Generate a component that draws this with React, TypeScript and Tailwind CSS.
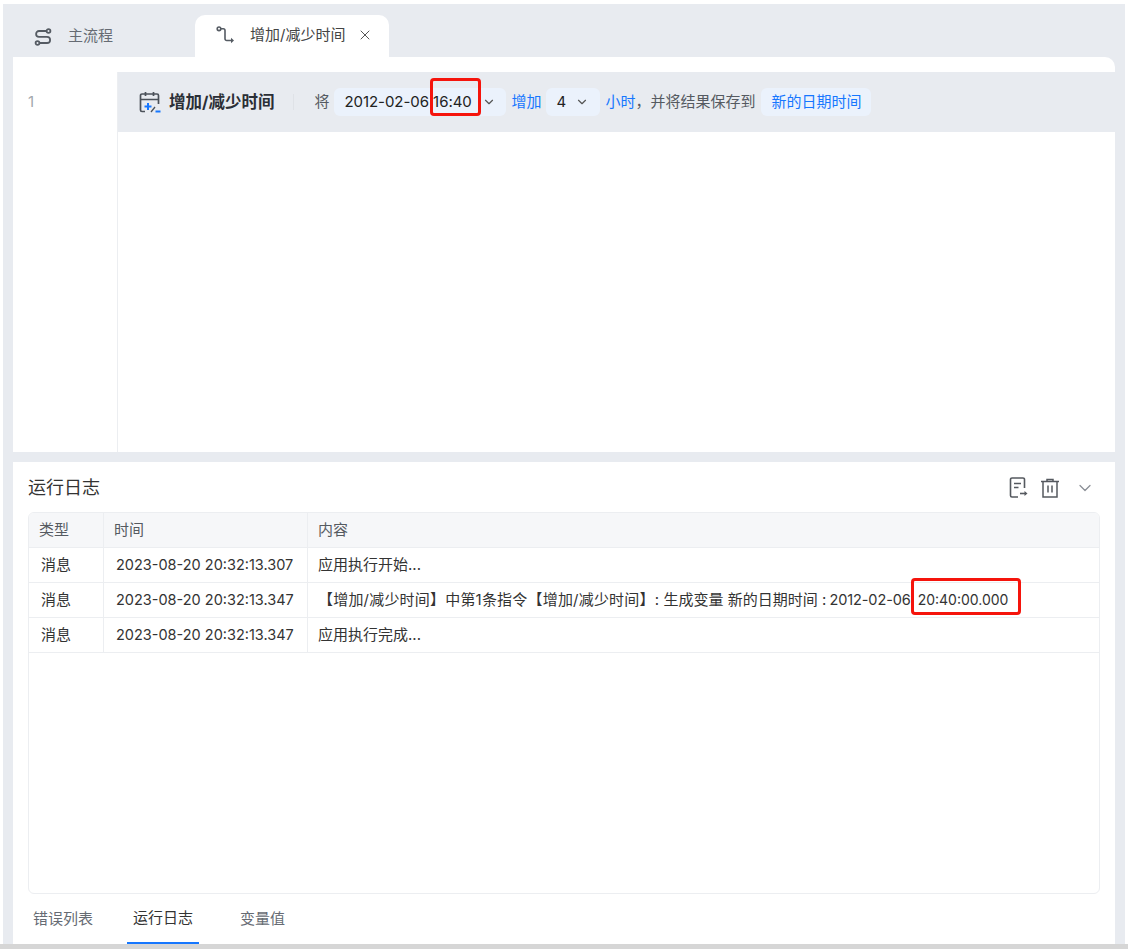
import { ChevronDown, X } from "lucide-react";

const FONT = "font-['Inter','Noto_Sans_CJK_SC',sans-serif]";

const logs = [
  { type: "消息", time: "2023-08-20 20:32:13.307", text: <>应用执行开始...</> },
  {
    type: "消息",
    time: "2023-08-20 20:32:13.347",
    text: (
      <>
        <span className="tracking-[0.2px]">【增加/减少时间】中第1条指令【增加/减少时间】:</span>
        <span> 生成变量 新的日期时间 : </span>
        <span className="ml-[-1px] text-[14.5px] tracking-[-0.1px]">2012-02-06</span>
        <span className="ml-[7px] text-[14px]">20:40:00.000</span>
      </>
    ),
  },
  { type: "消息", time: "2023-08-20 20:32:13.347", text: <>应用执行完成...</> },
];

function FlowIcon() {
  return (
    <svg width="18" height="18" viewBox="0 0 18 18" fill="none" stroke="#555b63" strokeWidth="1.8">
      <circle cx="14.500" cy="3" r="1.900" />
      <circle cx="3.500" cy="15" r="1.900" />
      <path d="M12.500 3H5a2.900 2.900 0 0 0 0 5.800h8a3 3 0 0 1 0 6.200H5.500" />
    </svg>
  );
}

function RouteIcon() {
  return (
    <svg width="19" height="18" viewBox="0 0 19 18" fill="none" stroke="#555b63" strokeWidth="1.6">
      <circle cx="3" cy="2.800" r="1.800" />
      <path d="M4.800 2.800h2.500a1.700 1.700 0 0 1 1.700 1.700v8.300a1.700 1.700 0 0 0 1.700 1.700h5" />
      <path d="M15 11.800l3 2.700-3 2.700z" fill="#555b63" stroke="none" />
    </svg>
  );
}

function CalendarIcon() {
  return (
    <svg width="22" height="22" viewBox="0 0 22 22" fill="none" strokeWidth="1.7">
      <path d="M6 20.500H3a1.500 1.500 0 0 1-1.500-1.500V4.500A1.500 1.500 0 0 1 3 3h15a1.500 1.500 0 0 1 1.500 1.500V13" stroke="#4b5159" />
      <path d="M1.500 8.500h18M6.500 1v4M14.500 1v4" stroke="#4b5159" />
      <path d="M5.500 15.500h7M9 12v7" stroke="#1677ff" strokeWidth="2" />
      <path d="M12 21l4-5" stroke="#4b5159" strokeWidth="1.300" />
      <path d="M16.500 20.500h5" stroke="#1677ff" strokeWidth="2" />
    </svg>
  );
}

function ExportLogIcon() {
  return (
    <svg width="20" height="22" viewBox="0 0 20 22" fill="none" stroke="#55595f" strokeWidth="1.6">
      <path d="M15.500 11V2.500a1.500 1.500 0 0 0-1.500-1.500H3A1.500 1.500 0 0 0 1.500 2.500v16A1.500 1.500 0 0 0 3 20h6" />
      <path d="M5 6.500h7M5 10.500h4.500" />
      <path d="M11 16.500h6" />
      <path d="M15.500 14l3 2.500-3 2.500z" fill="#55595f" stroke="none" />
    </svg>
  );
}

function TrashIcon() {
  return (
    <svg width="20" height="22" viewBox="0 0 20 22" fill="none" stroke="#55595f" strokeWidth="1.500">
      <path d="M1 4.500h18M7 4.500V2.500h6v2" />
      <path d="M3 4.500V20h14V4.500" />
      <path d="M8 8.500v7M12 8.500v7" />
    </svg>
  );
}

export default function App() {
  return (
    <div className={`${FONT} relative h-[949px] w-[1128px] overflow-hidden bg-white pl-[3px] pr-[3px] pt-1 text-[15px] text-[#333]`}>
      <div className="flex h-[940px] flex-col bg-[#e8ebf0] px-2.5">
        {/* tab bar */}
        <div className="flex h-[53px] shrink-0 items-end">
          <div className="flex h-[42px] w-[182px] items-center gap-[16px] pl-[21px] pt-[1px] text-[#666b73]">
            <FlowIcon />
            <span>主流程</span>
          </div>
          <div className="flex h-[42px] w-[194px] items-center rounded-t-[10px] bg-white pb-[2px] pl-[21px] text-[#444]">
            <RouteIcon />
            <span className="ml-[15px]">增加/减少时间</span>
            <X className="ml-[12px] h-[16px] w-[16px] text-[#555]" strokeWidth={1.5} />
          </div>
        </div>

        {/* editor */}
        <div className="flex h-[395px] shrink-0 rounded-tr-[10px] bg-white pt-[15px]">
          <div className="w-[104px] shrink-0 pl-[15px] pt-[19px] text-[#a3a7ad]">1</div>
          <div className="flex-1 border-l border-[#eceef1]">
            <div className="flex h-[60px] items-center bg-[#e8ebf0] pl-[21px] text-[#555a61]">
              <CalendarIcon />
              <span className="ml-[8px] text-[16.5px] font-bold text-[#2b2f36]">增加/减少时间</span>
              <div className="ml-[19px] h-[16px] w-px bg-[#dfe2e7]" />
              <span className="ml-[20px]">将</span>
              <div className="ml-[5px] flex h-[28px] w-[172px] items-center rounded-md bg-[#ebf2fc] pl-[10px] text-[#222]">
                <span className="tracking-[-0.05px]">2012-02-06 16:40</span>
                <ChevronDown className="ml-auto mr-[10px] h-[14px] w-[14px] text-[#555]" />
              </div>
              <span className="ml-[5px] text-[#1677ff]">增加</span>
              <div className="ml-[5px] flex h-[28px] w-[54px] items-center rounded-md bg-[#ebf2fc] pl-[10px] text-[#222]">
                <span>4</span>
                <ChevronDown className="ml-auto mr-[11px] h-[14px] w-[14px] text-[#555]" />
              </div>
              <span className="ml-[5px] text-[#1677ff]">小时</span>
              <span>，并将结果保存到</span>
              <div className="ml-[6px] flex h-[28px] items-center rounded-md bg-[#ebf2fc] px-[10px] text-[#1677ff]">新的日期时间</div>
            </div>
          </div>
        </div>

        {/* log panel */}
        <div className="mt-2.5 flex min-h-0 flex-1 flex-col bg-white px-[15px]">
          <div className="flex h-[50px] shrink-0 items-center pt-[2px]">
            <span className="text-lg text-[#333]">运行日志</span>
            <div className="ml-auto flex items-center">
              <div className="mr-[-1px]"><ExportLogIcon /></div>
              <div className="ml-[12px]"><TrashIcon /></div>
              <ChevronDown className="ml-[15px] mr-[5px] h-[20px] w-[20px] text-[#8b8f96]" strokeWidth={1.5} />
            </div>
          </div>
          <div className="h-[382px] shrink-0 overflow-hidden rounded-md border border-[#eceef1]">
            <div className="flex h-[35px] border-b border-[#eceef1] bg-[#f6f7f9] text-[#555a61]">
              <div className="flex w-[75px] items-center border-r border-[#eceef1] pl-[10px]">类型</div>
              <div className="flex w-[204px] items-center border-r border-[#eceef1] pl-[10px]">时间</div>
              <div className="flex flex-1 items-center pl-[10px]">内容</div>
            </div>
            {logs.map((l, i) => (
              <div key={i} className="flex h-[35px] border-b border-[#eceef1] text-[#333]">
                <div className="flex w-[75px] items-center border-r border-[#eceef1] pl-[12px]">{l.type}</div>
                <div className="flex w-[204px] items-center border-r border-[#eceef1] pl-[12px] text-[14.5px]">{l.time}</div>
                <div className="flex-1 self-center whitespace-nowrap pl-[10px]">{l.text}</div>
              </div>
            ))}
          </div>
          <div className="flex h-[50px] items-end text-[#666b73]">
            <div className="flex h-[50px] w-[99px] items-center pl-[5px]">错误列表</div>
            <div className="flex h-[50px] w-[72px] items-center justify-center border-b-2 border-[#1677ff] text-[#333]">运行日志</div>
            <div className="ml-[41px] flex h-[50px] items-center">变量值</div>
          </div>
        </div>
      </div>
      <div className="absolute bottom-0 left-0 h-[5px] w-full bg-[#d6d6d6]" />

      {/* red annotation boxes */}
      <div className="absolute left-[430px] top-[78px] h-[38px] w-[51px] rounded-sm border-[3px] border-[#f5140c]" />
      <div className="absolute left-[911px] top-[578px] h-[37px] w-[110px] rounded-sm border-[3px] border-[#f5140c]" />
    </div>
  );
}
